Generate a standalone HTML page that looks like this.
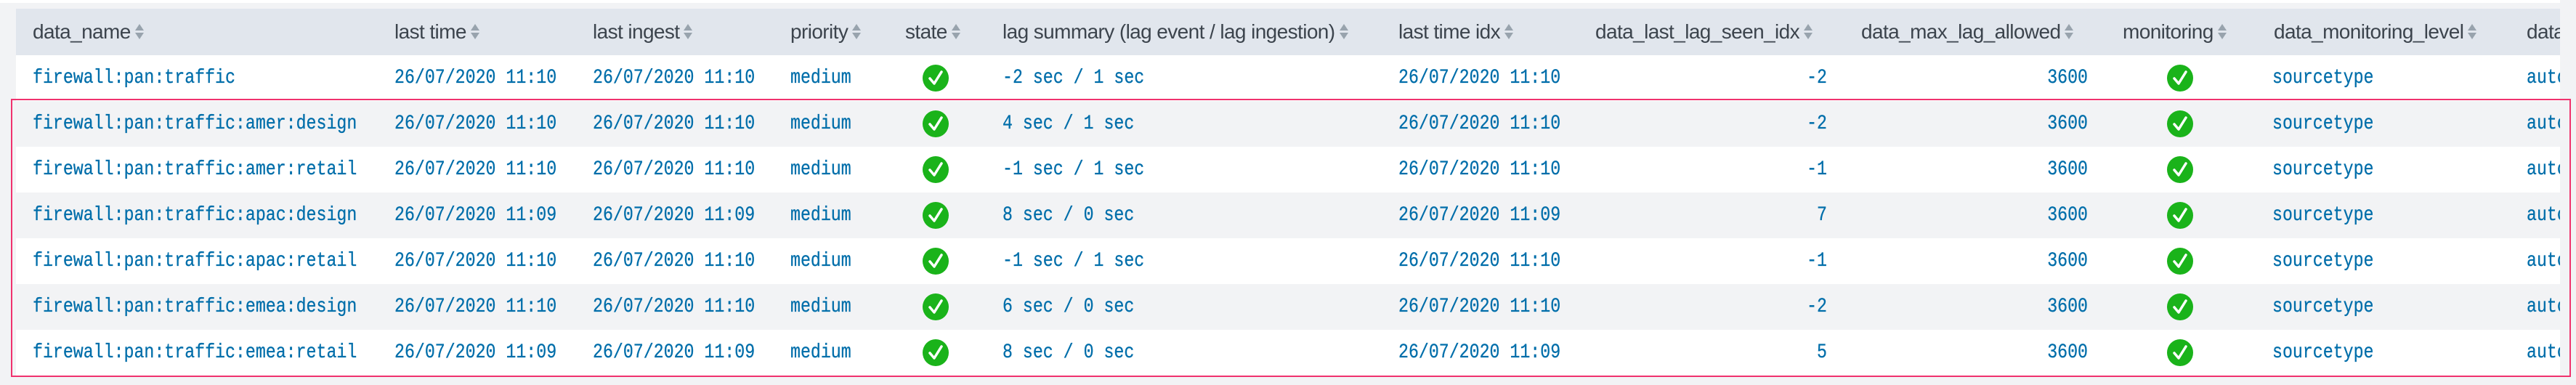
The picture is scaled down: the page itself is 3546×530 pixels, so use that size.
<!DOCTYPE html>
<html><head><meta charset="utf-8"><style>
*{margin:0;padding:0;box-sizing:border-box}
body{width:3546px;height:530px;background:#f2f3f5;position:relative;overflow:hidden;font-family:"Liberation Sans",sans-serif}
#top{position:absolute;left:0;top:0;width:3524px;height:4px;background:#fff}
#tbl{position:absolute;left:22px;top:12px;width:3502px;height:506px;overflow:hidden}
.hd{position:absolute;left:0;top:0;width:100%;height:64px;background:#e1e6ed}
.row{position:absolute;left:0;width:100%;height:63px}
.w{background:#fff}.g{background:#f2f3f5}
.h{position:absolute;top:0;line-height:64px;font-size:28px;color:#3c444d;white-space:nowrap;letter-spacing:-0.6px}
.h i{display:inline-block;width:12px;height:22px;vertical-align:middle;margin-left:6px;position:relative;top:-2px}
.h i:before{content:"";position:absolute;left:0;top:0;border-left:6px solid transparent;border-right:6px solid transparent;border-bottom:9px solid #98a3ad}
.h i:after{content:"";position:absolute;left:0;top:12px;border-left:6px solid transparent;border-right:6px solid transparent;border-top:9px solid #98a3ad}
.c{position:absolute;top:0;line-height:63px;font-family:"Liberation Mono",monospace;font-size:28px;color:#006eaa;white-space:nowrap;transform:scaleX(0.83);transform-origin:left center;-webkit-text-stroke:0.3px #006eaa}
.r{text-align:right;transform-origin:right center}
.ok{position:absolute;top:13px;width:36px;height:37px}
#box{position:absolute;left:15px;top:136px;width:3524px;height:383px;border:2px solid #f0326e}
</style></head><body>
<div id="top"></div>
<div id="tbl">
<div class="hd">
<span class="h" style="left:23px">data_name<i></i></span>
<span class="h" style="left:521px">last time<i></i></span>
<span class="h" style="left:794px">last ingest<i></i></span>
<span class="h" style="left:1066px">priority<i></i></span>
<span class="h" style="left:1224px">state<i></i></span>
<span class="h" style="left:1358px">lag summary (lag event / lag ingestion)<i></i></span>
<span class="h" style="left:1903px">last time idx<i></i></span>
<span class="h" style="left:2174px">data_last_lag_seen_idx<i></i></span>
<span class="h" style="left:2540px">data_max_lag_allowed<i></i></span>
<span class="h" style="left:2900px">monitoring<i></i></span>
<span class="h" style="left:3108px">data_monitoring_level<i></i></span>
<span class="h" style="left:3456px">data_monitoring_wdays<i></i></span>
</div>
</div>
<div id="box"></div>
<script>
var rows=[
["firewall:pan:traffic","11:10","11:10","-2 sec / 1 sec","11:10","-2"],
["firewall:pan:traffic:amer:design","11:10","11:10","4 sec / 1 sec","11:10","-2"],
["firewall:pan:traffic:amer:retail","11:10","11:10","-1 sec / 1 sec","11:10","-1"],
["firewall:pan:traffic:apac:design","11:09","11:09","8 sec / 0 sec","11:09","7"],
["firewall:pan:traffic:apac:retail","11:10","11:10","-1 sec / 1 sec","11:10","-1"],
["firewall:pan:traffic:emea:design","11:10","11:10","6 sec / 0 sec","11:10","-2"],
["firewall:pan:traffic:emea:retail","11:09","11:09","8 sec / 0 sec","11:09","5"]];
var ok='<svg viewBox="0 0 36 37"><ellipse cx="18" cy="18.5" rx="18" ry="18.5" fill="#1ab31a"/><path d="M10 19 L16 26 L26 10" stroke="#fff" stroke-width="3.5" fill="none" stroke-linecap="round" stroke-linejoin="round"/></svg>';
var t=document.getElementById('tbl'),h='';
rows.forEach(function(r,i){
h+='<div class="row '+(i%2?'g':'w')+'" style="top:'+(64+i*63)+'px">'+
'<span class="c" style="left:23px">'+r[0]+'</span>'+
'<span class="c" style="left:521px">26/07/2020 '+r[1]+'</span>'+
'<span class="c" style="left:794px">26/07/2020 '+r[2]+'</span>'+
'<span class="c" style="left:1066px">medium</span>'+
'<span class="ok" style="left:1248px">'+ok+'</span>'+
'<span class="c" style="left:1358px">'+r[3]+'</span>'+
'<span class="c" style="left:1903px">26/07/2020 '+r[4]+'</span>'+
'<span class="c r" style="left:2293px;width:200px">'+r[5]+'</span>'+
'<span class="c r" style="left:2652px;width:200px">3600</span>'+
'<span class="ok" style="left:2961px">'+ok+'</span>'+
'<span class="c" style="left:3106px">sourcetype</span>'+
'<span class="c" style="left:3456px">auto</span></div>';
});
t.insertAdjacentHTML('beforeend',h);
</script>
</body></html>
